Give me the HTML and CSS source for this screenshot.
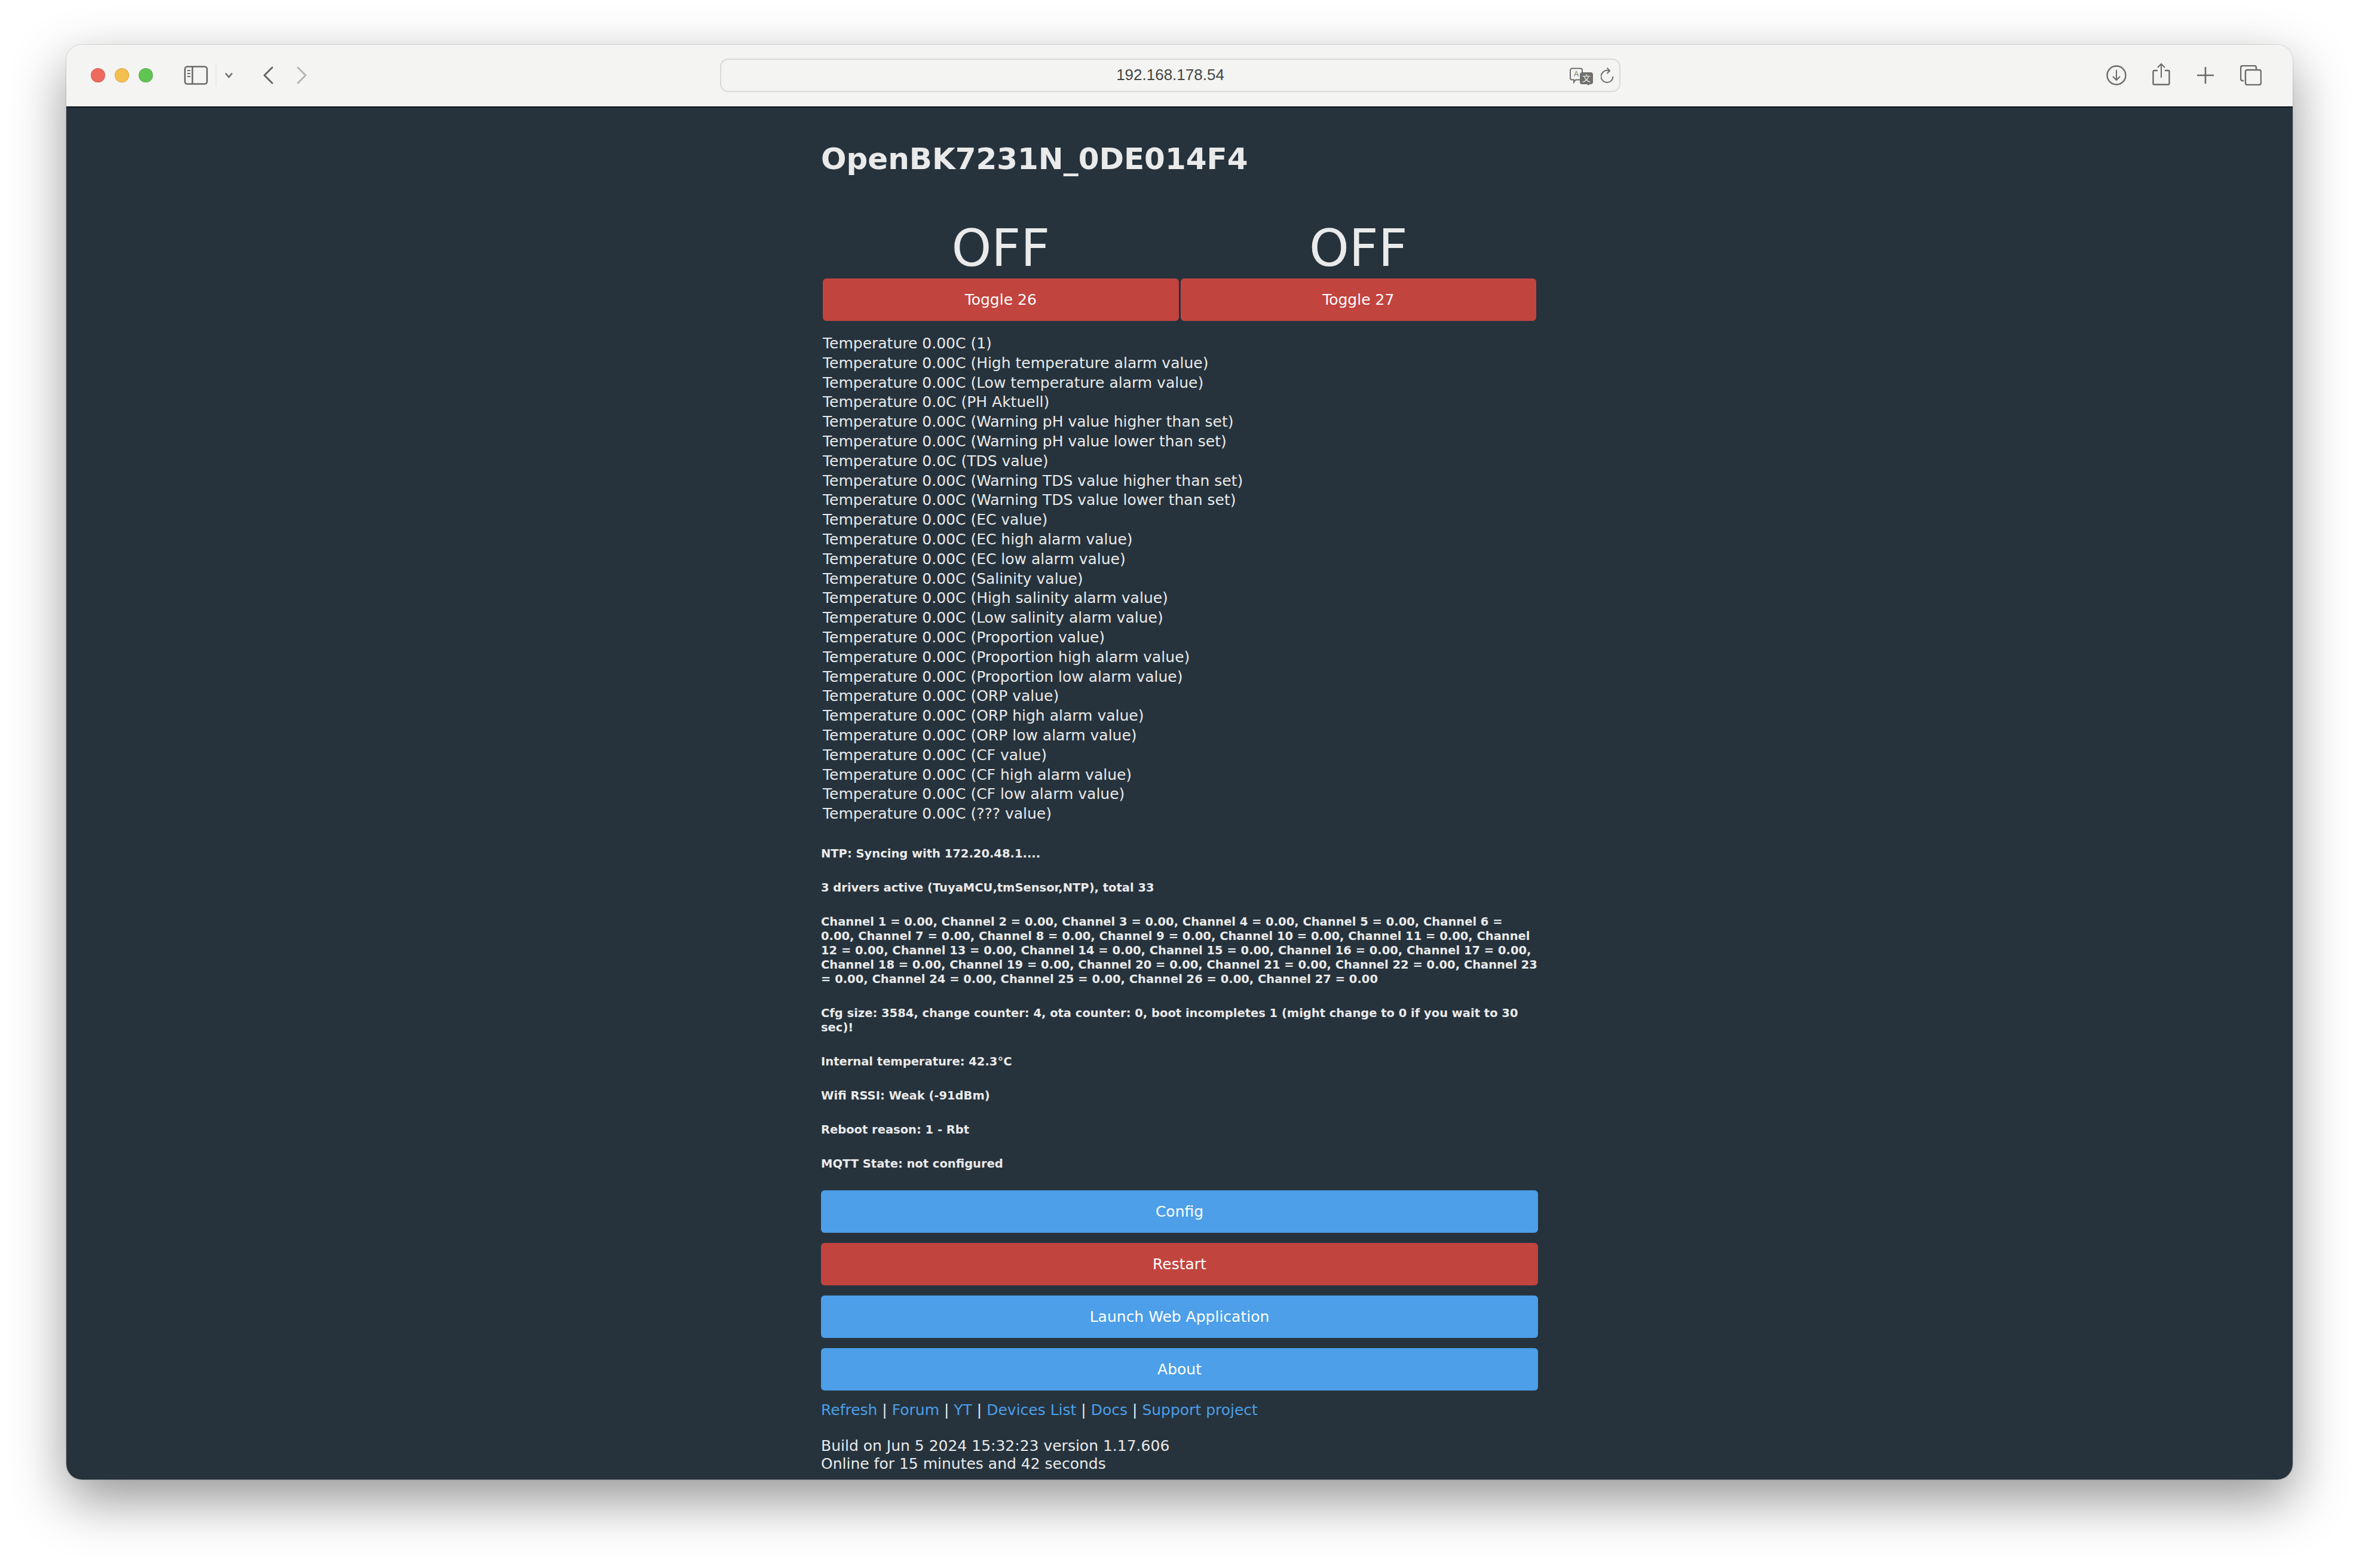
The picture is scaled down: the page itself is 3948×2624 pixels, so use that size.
FILE: index.html
```html
<!DOCTYPE html>
<html lang="en">

<head>
    <meta charset="UTF-8">
    <title>OpenBK7231N_0DE014F4</title>
    <link rel="stylesheet" href="styles.css">
</head>

<body>
    <div class="window">
        <div class="toolbar">
            <span class="light red"></span>
            <span class="light yellow"></span>
            <span class="light green"></span>
            <svg class="icon sidebar" width="40" height="32" viewBox="0 0 40 32" fill="none" stroke="#6a6a68" stroke-width="2.6">
                <rect x="1.5" y="1.5" width="37" height="29" rx="4" />
                <path d="M14 1.5v29" />
                <path d="M5.5 8h5M5.5 13h5M5.5 18h5" stroke-width="2" />
            </svg>
            <span class="divider"></span>
            <svg class="icon chevron" width="14" height="10" viewBox="0 0 14 10" fill="none" stroke="#6f6f6d" stroke-width="2.6">
                <path d="M1.5 1.5L7 8l5.5-6.5" />
            </svg>
            <svg class="icon back" width="18" height="30" viewBox="0 0 18 30" fill="none" stroke="#666664" stroke-width="3" stroke-linecap="round" stroke-linejoin="round">
                <path d="M15.5 2L2.5 15l13 13" />
            </svg>
            <svg class="icon forward" width="18" height="30" viewBox="0 0 18 30" fill="none" stroke="#b5b5b3" stroke-width="3" stroke-linecap="round" stroke-linejoin="round">
                <path d="M2.5 2l13 13-13 13" />
            </svg>
            <div class="urlbar">
                <span class="url">192.168.178.54</span>
                <svg class="translate" width="40" height="30" viewBox="0 0 40 30">
                    <path d="M4 1.5h14a3 3 0 0 1 3 3v13a3 3 0 0 1-3 3H10l-3 4v-4H4a3 3 0 0 1-3-3v-13a3 3 0 0 1 3-3z" fill="#f4f4f2" stroke="#6f6f6d" stroke-width="2" />
                    <text x="11" y="15" class="translate-a">A</text>
                    <path d="M21 8h14a4 4 0 0 1 4 4v12a4 4 0 0 1-4 4h-2l-1 2-3-2h-8a4 4 0 0 1-4-4V12a4 4 0 0 1 4-4z" fill="#6f6f6d" />
                    <text x="28" y="23" class="translate-b">文</text>
                </svg>
                <svg class="reload" width="22" height="30" viewBox="0 0 22 30" fill="none" stroke="#6f6f6d" stroke-width="2">
                    <path d="M14 6.5A10 10 0 1 0 20.5 16" />
                    <path d="M10.5 1.5L15 6.5l-4.5 4.5" />
                </svg>
            </div>
            <svg class="icon download" width="34" height="34" viewBox="0 0 34 34" fill="none" stroke="#6a6a68" stroke-width="2.4">
                <circle cx="17" cy="17" r="15.5" />
                <path d="M17 8v17M11 19l6 6 6-6" stroke-width="2" />
            </svg>
            <svg class="icon share" width="30" height="38" viewBox="0 0 30 38" fill="none" stroke="#6a6a68" stroke-width="2.4">
                <path d="M9 13H3.5a2 2 0 0 0-2 2v19.5a2 2 0 0 0 2 2h23a2 2 0 0 0 2-2V15a2 2 0 0 0-2-2H21" />
                <path d="M15 25V2M9 8l6-6 6 6" stroke-width="2" />
            </svg>
            <svg class="icon plus" width="28" height="28" viewBox="0 0 28 28" fill="none" stroke="#6a6a68" stroke-width="2.6">
                <path d="M14 0v28M0 14h28" />
            </svg>
            <svg class="icon tabs" width="36" height="34" viewBox="0 0 36 34" fill="none" stroke="#6a6a68" stroke-width="2.4">
                <path d="M6 26H4a3 3 0 0 1-3-3V4a3 3 0 0 1 3-3h20a3 3 0 0 1 3 3v3" />
                <rect x="9" y="8" width="26" height="25" rx="3" />
            </svg>
        </div>

        <div class="page">
            <div class="container">
                <h1 class="title">OpenBK7231N_0DE014F4</h1>

                <div class="toggles">
                    <div class="state">OFF</div>
                    <div class="state">OFF</div>
                    <a class="button danger">Toggle 26</a>
                    <a class="button danger">Toggle 27</a>
                </div>

                <div class="readings">
                    <div>Temperature 0.00C (1)</div>
                    <div>Temperature 0.00C (High temperature alarm value)</div>
                    <div>Temperature 0.00C (Low temperature alarm value)</div>
                    <div>Temperature 0.0C (PH Aktuell)</div>
                    <div>Temperature 0.00C (Warning pH value higher than set)</div>
                    <div>Temperature 0.00C (Warning pH value lower than set)</div>
                    <div>Temperature 0.0C (TDS value)</div>
                    <div>Temperature 0.00C (Warning TDS value higher than set)</div>
                    <div>Temperature 0.00C (Warning TDS value lower than set)</div>
                    <div>Temperature 0.00C (EC value)</div>
                    <div>Temperature 0.00C (EC high alarm value)</div>
                    <div>Temperature 0.00C (EC low alarm value)</div>
                    <div>Temperature 0.00C (Salinity value)</div>
                    <div>Temperature 0.00C (High salinity alarm value)</div>
                    <div>Temperature 0.00C (Low salinity alarm value)</div>
                    <div>Temperature 0.00C (Proportion value)</div>
                    <div>Temperature 0.00C (Proportion high alarm value)</div>
                    <div>Temperature 0.00C (Proportion low alarm value)</div>
                    <div>Temperature 0.00C (ORP value)</div>
                    <div>Temperature 0.00C (ORP high alarm value)</div>
                    <div>Temperature 0.00C (ORP low alarm value)</div>
                    <div>Temperature 0.00C (CF value)</div>
                    <div>Temperature 0.00C (CF high alarm value)</div>
                    <div>Temperature 0.00C (CF low alarm value)</div>
                    <div>Temperature 0.00C (??? value)</div>
                </div>

                <div class="status">
                    <p>NTP: Syncing with 172.20.48.1....</p>
                    <p>3 drivers active (TuyaMCU,tmSensor,NTP), total 33</p>
                    <p>Channel 1 = 0.00, Channel 2 = 0.00, Channel 3 = 0.00, Channel 4 = 0.00, Channel 5 = 0.00, Channel 6 = 0.00, Channel 7 = 0.00, Channel 8 = 0.00, Channel 9 = 0.00, Channel 10 = 0.00, Channel 11 = 0.00, Channel 12 = 0.00, Channel 13 = 0.00, Channel 14 = 0.00, Channel 15 = 0.00, Channel 16 = 0.00, Channel 17 = 0.00, Channel 18 = 0.00, Channel 19 = 0.00, Channel 20 = 0.00, Channel 21 = 0.00, Channel 22 = 0.00, Channel 23 = 0.00, Channel 24 = 0.00, Channel 25 = 0.00, Channel 26 = 0.00, Channel 27 = 0.00</p>
                    <p>Cfg size: 3584, change counter: 4, ota counter: 0, boot incompletes 1 (might change to 0 if you wait to 30 sec)!</p>
                    <p>Internal temperature: 42.3°C</p>
                    <p>Wifi RSSI: Weak (-91dBm)</p>
                    <p>Reboot reason: 1 - Rbt</p>
                    <p>MQTT State: not configured</p>
                </div>

                <div class="actions">
                    <a class="button">Config</a>
                    <a class="button danger">Restart</a>
                    <a class="button">Launch Web Application</a>
                    <a class="button">About</a>
                </div>

                <div class="links">
                    <a>Refresh</a> | <a>Forum</a> | <a>YT</a> | <a>Devices List</a> | <a>Docs</a> | <a>Support project</a>
                </div>

                <div class="build">
                    Build on Jun 5 2024 15:32:23 version 1.17.606<br>
                    Online for 15 minutes and 42 seconds
                </div>
            </div>
        </div>
    </div>
</body>

</html>
```

FILE: styles.css
```css
html,
body {
    margin: 0;
    padding: 0;
    background: #fff;
}

body {
    height: 2624px;
    padding: 75px 0 0 111px;
    box-sizing: border-box;
    overflow: hidden;
    font-family: "DejaVu Sans", sans-serif;
}

.window {
    width: 3726px;
    height: 2401px;
    display: flex;
    flex-direction: column;
    border-radius: 26px;
    overflow: hidden;
    box-shadow: 0 34px 90px rgba(0, 0, 0, 0.42), 0 0 2px rgba(0, 0, 0, 0.35);
}

/* browser chrome */
.toolbar {
    height: 105px;
    flex: none;
    display: flex;
    align-items: center;
    padding-left: 41px;
    padding-bottom: 2px;
    box-sizing: border-box;
    background: #f4f4f2;
    border-bottom: 2px solid #14181c;
}

.light {
    width: 24px;
    height: 24px;
    margin-right: 16px;
    border-radius: 50%;
    box-sizing: border-box;
    border: 1px solid rgba(0, 0, 0, 0.12);
}

.red { background: #ee6a5e; }
.yellow { background: #f5bf4f; }
.green { background: #61c554; }

.icon {
    flex: none;
    display: block;
}

.sidebar { margin-left: 36px; }

.divider {
    width: 1px;
    height: 36px;
    margin-left: 13px;
    background: #e0e0de;
}

.chevron { margin-left: 14px; }
.back { margin-left: 50px; }
.forward { margin-left: 38px; }

.urlbar {
    position: relative;
    width: 1507px;
    height: 56px;
    margin-left: 691px;
    box-sizing: border-box;
    flex: none;
    display: flex;
    align-items: center;
    justify-content: center;
    border: 2px solid #d9d9d7;
    border-radius: 14px;
}

.url {
    font-family: "Liberation Sans", sans-serif;
    font-size: 26px;
    color: #444;
}

.translate {
    position: absolute;
    right: 43px;
    top: 13px;
}

.translate-a {
    font-family: "Liberation Sans", sans-serif;
    font-size: 12px;
    fill: #6f6f6d;
    text-anchor: middle;
}

.translate-b {
    font-family: "Noto Sans CJK SC", sans-serif;
    font-size: 14px;
    fill: #f4f4f2;
    text-anchor: middle;
}

.reload {
    position: absolute;
    right: 9px;
    top: 12px;
}

.download { margin-left: 813px; }
.share { margin-left: 43px; margin-top: -4px; }
.plus { margin-left: 45px; }
.tabs { margin-left: 44px; }

/* device page */
.page {
    flex: 1;
    background: #26333d;
    color: #eaeaea;
    font-size: 25px;
}

.container {
    width: 1200px;
    margin: 0 auto;
}

.title {
    margin: 0;
    padding-top: 56px;
    font-size: 50px;
    line-height: 60px;
    font-weight: bold;
}

.toggles {
    display: grid;
    grid-template-columns: 1fr 1fr;
    column-gap: 3px;
    padding: 0 3px;
    margin-top: 70px;
}

.state {
    font-size: 85px;
    line-height: 100px;
    text-align: center;
}

.button {
    display: block;
    height: 71px;
    line-height: 71px;
    text-align: center;
    font-size: 25px;
    color: #fff;
    background: #4c9fe8;
    border-radius: 6px;
}

.danger {
    background: #c2443e;
}

.readings {
    padding: 0 3px;
    margin-top: 22px;
    line-height: 32.8px;
}

.status {
    margin-top: 38px;
    font-size: 19.5px;
    line-height: 24px;
    font-weight: bold;
}

.status p {
    margin: 0 0 33px;
}

.actions {
    display: flex;
    flex-direction: column;
    gap: 17px;
    margin-top: -1px;
}

.links {
    margin-top: 18px;
    line-height: 30px;
}

.links a {
    color: #4c9fe8;
}

.build {
    margin-top: 30px;
    line-height: 30px;
}
```
